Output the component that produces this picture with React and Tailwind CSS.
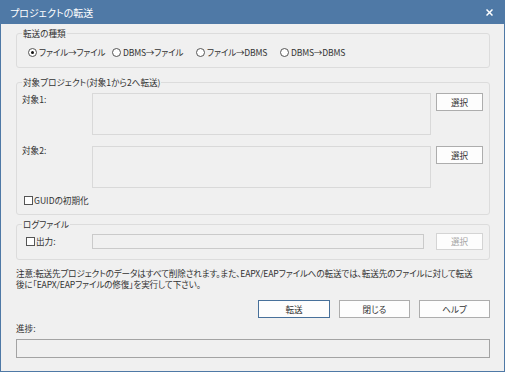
import React, { useState } from "react";

const Radio = ({ checked, label, onClick }) => (
  <div className="flex w-[84px] items-center" onClick={onClick}>
    <span className="flex h-[9px] w-[9px] items-center justify-center rounded-full border border-[#555] bg-white">
      {checked && <span className="h-[3px] w-[3px] rounded-full bg-[#111]" />}
    </span>
    <span className="ml-[2px] whitespace-nowrap tracking-[-0.2px]">{label}</span>
  </div>
);

const Check = () => (
  <span className="h-[9px] w-[9px] border border-[#555] bg-white" />
);

const Btn = ({ children, w = "w-[71px]", h = "h-[18px]", primary, disabled }) => (
  <button
    className={`${w} ${h} flex items-center justify-center border bg-[#fdfdfd] leading-[9px] ${
      primary ? "border-[#47709a]" : disabled ? "border-[#d4d4d4] text-[#a6a6a6]" : "border-[#adadad]"
    }`}
    disabled={disabled}
  >
    {children}
  </button>
);

const App = () => {
  const [mode, setMode] = useState(0);
  const modes = ["ファイル→ファイル", "DBMS→ファイル", "ファイル→DBMS", "DBMS→DBMS"];

  return (
    <div className="flex h-[372px] w-[505px] flex-col bg-[#4f79a6] font-['Noto_Sans_CJK_JP',sans-serif] text-[8.6px] text-[#333] [font-feature-settings:'palt']">
      {/* title bar */}
      <div className="flex h-[24px] items-center justify-between pl-[10px] pr-[12px] text-[10px] text-white">
        <span>プロジェクトの転送</span>
        <svg width="7" height="7" viewBox="0 0 7 7">
          <path d="M0.5 0.5L6.5 6.5M6.5 0.5L0.5 6.5" stroke="white" strokeWidth="1.5" />
        </svg>
      </div>

      <div className="mx-[1px] mb-[1px] flex flex-1 flex-col bg-[#f0f0f0] pl-[15px] pr-[14px]">
        {/* transfer type */}
        <fieldset className="mt-[2px] h-[42px] rounded-[3px] border border-[#dcdcdc]">
          <legend className="ml-[5px] px-[1px] leading-[14px]">転送の種類</legend>
          <div className="mt-[6px] flex pl-[11px] leading-[12px]">
            {modes.map((m, i) => (
              <Radio key={i} label={m} checked={mode === i} onClick={() => setMode(i)} />
            ))}
          </div>
        </fieldset>

        {/* target projects */}
        <fieldset className="mt-[7px] h-[140px] rounded-[3px] border border-[#dcdcdc]">
          <legend className="ml-[5px] px-[1px] leading-[14px]">対象プロジェクト(対象1から2へ転送)</legend>
          <div className="mt-[4px] flex items-start">
            <div className="w-[75px] pl-[5px] pt-[2px] leading-[9px]">対象1:</div>
            <div className="h-[42px] w-[339px] border border-[#d9d9d9]" />
            <div className="ml-[5px]">
              <Btn w="w-[47px]">選択</Btn>
            </div>
          </div>
          <div className="mt-[11px] flex items-start">
            <div className="w-[75px] pl-[5px] leading-[9px]">対象2:</div>
            <div className="h-[42px] w-[339px] border border-[#d9d9d9]" />
            <div className="ml-[5px]">
              <Btn w="w-[47px]">選択</Btn>
            </div>
          </div>
          <div className="mt-[8px] flex items-center pl-[7px] leading-[9px]">
            <Check />
            <span className="ml-[1px]">GUIDの初期化</span>
          </div>
        </fieldset>

        {/* log file */}
        <fieldset className="mt-[2px] h-[43px] rounded-[3px] border border-[#dcdcdc]">
          <legend className="ml-[5px] px-[1px] leading-[14px]">ログファイル</legend>
          <div className="mt-[2px] flex h-[17px] items-center">
            <div className="flex w-[75px] items-center pl-[9px] leading-[9px]">
              <Check />
              <span className="ml-[1px]">出力:</span>
            </div>
            <div className="h-[15px] w-[332px] border border-[#cacaca]" />
            <div className="ml-[12px]">
              <Btn w="w-[47px]" h="h-[17px]" disabled>
                選択
              </Btn>
            </div>
          </div>
        </fieldset>

        {/* note */}
        <p className="mt-[8px] whitespace-nowrap leading-[11px] tracking-[-0.15px]">
          注意:転送先プロジェクトのデータはすべて削除されます。また、EAPX/EAPファイルへの転送では、転送先のファイルに対して転送
          <br />
          後に「EAPX/EAPファイルの修復」を実行して下さい。
        </p>

        {/* actions */}
        <div className="mt-[10px] flex justify-end gap-[9px]">
          <Btn w="w-[72px]" primary>
            転送
          </Btn>
          <Btn>閉じる</Btn>
          <Btn>ヘルプ</Btn>
        </div>

        <div className="mt-[6px] leading-[9px]">進捗:</div>
        <div className="mt-[6px] h-[19px] border border-[#a3a3a3]" />
      </div>
    </div>
  );
};

export default App;
